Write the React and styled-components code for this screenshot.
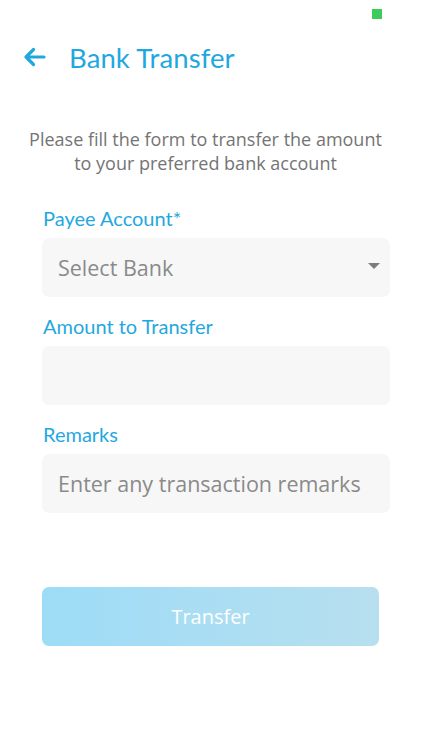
import styled, { createGlobalStyle } from "styled-components";

const GlobalStyle = createGlobalStyle`
  body {
    margin: 0;
    background: #fff;
    font-family: "Open Sans", "Liberation Sans", Arial, sans-serif;
  }
`;

const BLUE = "#1fa8e0";

const Screen = styled.div`
  width: 422px;
  height: 750px;
  background: #fff;
  display: flex;
  flex-direction: column;
`;

const StatusBar = styled.div`
  height: 28px;
  display: flex;
  justify-content: flex-end;
  padding: 9px 40px 0 0;
  box-sizing: border-box;
`;

const Dot = styled.span`
  width: 10px;
  height: 10px;
  background: #3dcc5c;
`;

const Header = styled.div`
  display: flex;
  align-items: center;
  height: 58px;
  padding-left: 23px;
  gap: 23px;

  h1 {
    margin: 0;
    font-family: Lato, sans-serif;
    font-weight: 400;
    font-size: 27.5px;
    color: ${BLUE};
    letter-spacing: 0.1px;
  }
`;

const Intro = styled.p`
  margin: 41px 0 0;
  padding-right: 11px;
  text-align: center;
  font-size: 18px;
  line-height: 24px;
  color: #747474;
`;

const Form = styled.form`
  display: flex;
  flex-direction: column;
  padding: 29px 32px 0 42px;
`;

const Label = styled.label`
  font-family: Lato, sans-serif;
  font-size: 20px;
  color: ${BLUE};
  height: 20px;
  line-height: 20px;
  margin: ${(p) => (p.$first ? "4px" : "19px")} 0 10px 1px;
`;

const Field = styled.div`
  height: 59px;
  border-radius: 7px;
  background: #f7f7f7;
  display: flex;
  align-items: center;
  justify-content: space-between;
  padding: 0 10px 0 16px;
  font-size: 21.5px;
  color: #8a8a8a;
`;

const Caret = styled.span`
  width: 0;
  height: 0;
  border-left: 6px solid transparent;
  border-right: 6px solid transparent;
  border-top: 6px solid #7d7d7d;
  margin-bottom: 4px;
`;

const Submit = styled.button`
  margin: 74px 0 0 42px;
  width: 337px;
  height: 59px;
  border: none;
  border-radius: 7px;
  background: linear-gradient(90deg, #9ddcf7 0%, #b7dfef 100%);
  color: #fff;
  font-family: "Open Sans", "Liberation Sans", Arial, sans-serif;
  font-size: 20px;
`;

const ArrowLeft = () => (
  <svg width="23" height="20" viewBox="0 0 23 20" fill="none">
    <path
      d="M21 10H3M10.5 2.5L3 10l7.5 7.5"
      stroke={BLUE}
      strokeWidth="3.2"
      strokeLinecap="round"
      strokeLinejoin="round"
    />
  </svg>
);

export default function App() {
  return (
    <Screen>
      <GlobalStyle />
      <StatusBar>
        <Dot />
      </StatusBar>
      <Header>
        <ArrowLeft />
        <h1>Bank Transfer</h1>
      </Header>
      <Intro>
        Please fill the form to transfer the amount
        <br />
        to your preferred bank account
      </Intro>
      <Form>
        <Label $first>Payee Account*</Label>
        <Field>
          <span>Select Bank</span>
          <Caret />
        </Field>
        <Label>Amount to Transfer</Label>
        <Field />
        <Label>Remarks</Label>
        <Field>
          <span>Enter any transaction remarks</span>
        </Field>
      </Form>
      <Submit type="button">Transfer</Submit>
    </Screen>
  );
}
